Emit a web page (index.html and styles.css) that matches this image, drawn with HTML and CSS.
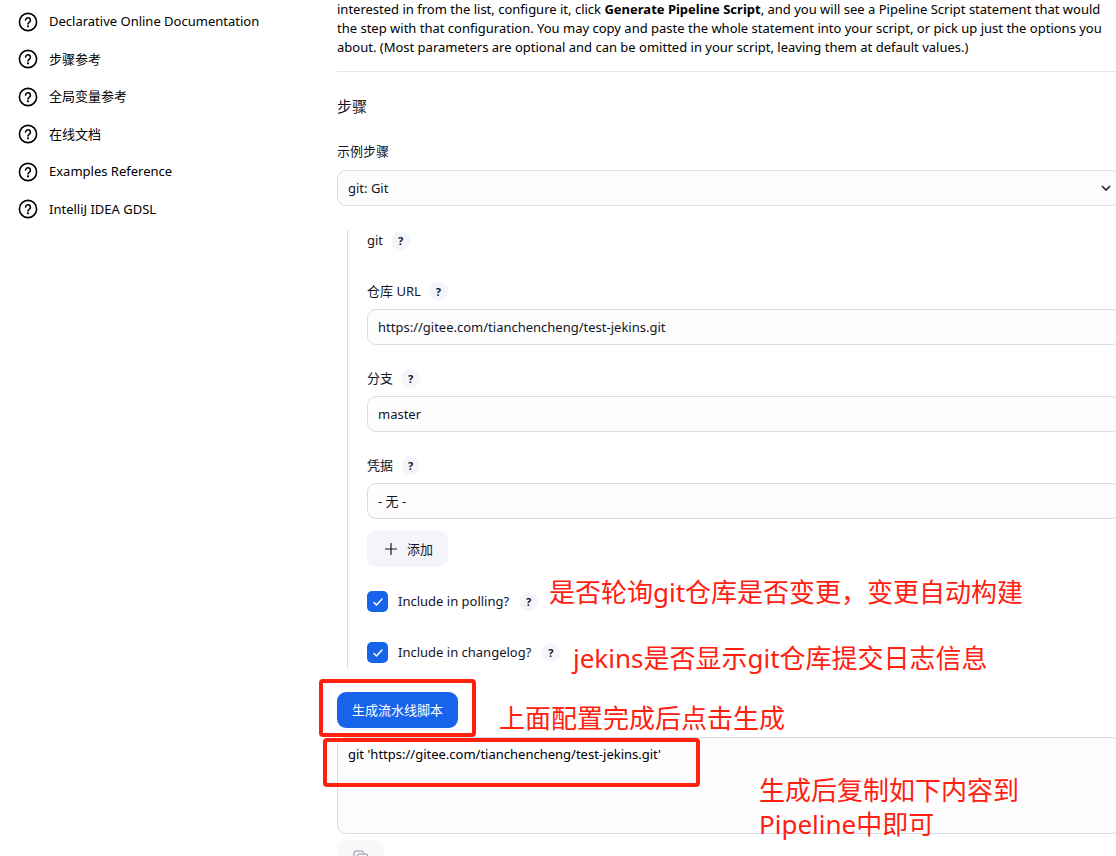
FILE: index.html
```
<!DOCTYPE html>
<html lang="zh-CN">
<head>
  <meta charset="UTF-8">
  <title>Pipeline Syntax</title>
  <meta name="viewport" content="width=device-width, initial-scale=1.0">
  <link rel="stylesheet" href="styles.css">
</head>
<body>
  <svg class="sprite" aria-hidden="true">
    <symbol id="icon-help" viewBox="0 0 20 20">
      <circle cx="10" cy="10" r="8.6" fill="none" stroke="currentColor" stroke-width="1.6"/>
      <path d="M7.6 8.1a2.4 2.4 0 1 1 3.8 2c-.9.6-1.4 1-1.4 1.8" fill="none" stroke="currentColor" stroke-width="1.6" stroke-linecap="round"/>
      <circle cx="10" cy="14.3" r="1.1" fill="currentColor"/>
    </symbol>
  </svg>

  <div class="page">
    <nav class="sidebar">
      <a class="task" href="#"><svg class="task-icon"><use href="#icon-help"/></svg>Declarative Online Documentation</a>
      <a class="task" href="#"><svg class="task-icon"><use href="#icon-help"/></svg>步骤参考</a>
      <a class="task" href="#"><svg class="task-icon"><use href="#icon-help"/></svg>全局变量参考</a>
      <a class="task" href="#"><svg class="task-icon"><use href="#icon-help"/></svg>在线文档</a>
      <a class="task" href="#"><svg class="task-icon"><use href="#icon-help"/></svg>Examples Reference</a>
      <a class="task" href="#"><svg class="task-icon"><use href="#icon-help"/></svg>IntelliJ IDEA GDSL</a>
    </nav>

    <main class="main">
      <p class="intro">
        interested in from the list, configure it, click <b>Generate Pipeline Script</b>, and you will see a Pipeline Script statement that would<br>
        the step with that configuration. You may copy and paste the whole statement into your script, or pick up just the options you<br>
        about. (Most parameters are optional and can be omitted in your script, leaving them at default values.)
      </p>

      <h2 class="section-title">步骤</h2>
      <label class="label" for="step">示例步骤</label>
      <select class="field select" id="step">
        <option>git: Git</option>
      </select>

      <div class="step-config">
        <div class="label-row">
          <span>git</span>
          <button class="help" type="button">?</button>
        </div>

        <div class="form-item">
          <div class="label-row">
            <label for="url">仓库 URL</label>
            <button class="help" type="button">?</button>
          </div>
          <input class="field" type="text" id="url" value="https://gitee.com/tianchencheng/test-jekins.git">
        </div>

        <div class="form-item">
          <div class="label-row">
            <label for="branch">分支</label>
            <button class="help" type="button">?</button>
          </div>
          <input class="field" type="text" id="branch" value="master">
        </div>

        <div class="form-item">
          <div class="label-row">
            <label for="credentials">凭据</label>
            <button class="help" type="button">?</button>
          </div>
          <select class="field" id="credentials">
            <option>- 无 -</option>
          </select>
        </div>

        <button class="btn add-btn" type="button">
          <svg class="add-icon" viewBox="0 0 12 12"><path d="M6 .5v11M.5 6h11" fill="none" stroke="currentColor" stroke-width="1.2" stroke-linecap="round"/></svg>
          添加
        </button>

        <div class="check-row">
          <input class="checkbox" type="checkbox" id="polling" checked>
          <label for="polling">Include in polling?</label>
          <button class="help" type="button">?</button>
        </div>
        <div class="check-row">
          <input class="checkbox" type="checkbox" id="changelog" checked>
          <label for="changelog">Include in changelog?</label>
          <button class="help" type="button">?</button>
        </div>
      </div>

      <button class="btn generate-btn" type="button">生成流水线脚本</button>
      <textarea class="field output" aria-label="Pipeline Script">git 'https://gitee.com/tianchencheng/test-jekins.git'</textarea>
      <button class="btn copy-btn" type="button" aria-label="Copy">
        <svg class="copy-icon" viewBox="0 0 16 16"><path d="M3.500 10.500H3a2 2 0 0 1-2-2V3a2 2 0 0 1 2-2h5.500a2 2 0 0 1 2 2" fill="none" stroke="currentColor"/><rect x="4" y="4" width="11" height="11" rx="2.500" fill="none" stroke="currentColor"/></svg>
      </button>
    </main>

    <!-- Red marks over the form -->
    <div class="mark mark-generate"></div>
    <div class="mark mark-output"></div>
    <p class="note note-polling">是否轮询git仓库是否变更，变更自动构建</p>
    <p class="note note-changelog">jekins是否显示git仓库提交日志信息</p>
    <p class="note note-generate">上面配置完成后点击生成</p>
    <p class="note note-output">生成后复制如下内容到<br>Pipeline中即可</p>
  </div>
</body>
</html>
```
FILE: styles.css
```
:root {
  --text-color: #14141f;
  --accent-color: #1764ea;
  --border-color: #d8dcea;
  --field-color: #fdfdfe;
  --button-color: #f4f5fa;
  --mark-color: #ff2010;
}

* {
  box-sizing: border-box;
}

body {
  margin: 0;
  font-family: "Noto Sans", "Noto Sans CJK SC", sans-serif;
  font-size: 13px;
  line-height: 19px;
  color: var(--text-color);
  background: #fff;
}

button, input, select, textarea {
  font: inherit;
  color: inherit;
}

.sprite {
  display: none;
}

.page {
  position: relative;
  display: grid;
  grid-template-columns: 337px 1fr;
  height: 100vh;
  overflow: hidden;
}

/* Sidebar */
.sidebar {
  display: grid;
  grid-auto-rows: 1fr;
  height: 225px;
  margin-top: 3px;
  padding-left: 18px;
}

.task {
  display: flex;
  align-items: center;
  gap: 11px;
  color: #000;
  text-decoration: none;
}

.task-icon {
  width: 20px;
  height: 20px;
}

/* The form runs a little past the right edge of the window */
.main {
  min-width: 0;
  margin-right: -5px;
}

.intro {
  margin: 0;
  padding-bottom: 14px;
  border-bottom: 1px solid #e6e7ec;
  white-space: nowrap;
  color: #000;
}

.section-title {
  margin: 23px 0 25px;
  font-size: 15px;
  line-height: 22px;
  font-weight: 400;
}

.label {
  display: block;
  margin-bottom: 9px;
}

.field {
  display: block;
  width: 100%;
  height: 36px;
  padding: 0 10px;
  border: 1px solid var(--border-color);
  border-radius: 9px;
  background: var(--field-color);
  outline: none;
  appearance: none;
}

.select {
  background: var(--field-color) url("data:image/svg+xml,%3Csvg xmlns='http://www.w3.org/2000/svg' viewBox='0 0 10 6'%3E%3Cpath d='M1 1l4 4 4-4' fill='none' stroke='%23222' stroke-width='1.6'/%3E%3C/svg%3E") no-repeat right 9px center / 10px 6px;
}

.step-config {
  margin: 24px 0 24px 10px;
  padding: 1px 0 5px 19px;
  border-left: 1px solid var(--border-color);
}

.label-row {
  display: flex;
  align-items: center;
  gap: 8px;
  height: 19px;
}

.help {
  width: 19px;
  height: 19px;
  padding: 0;
  border: none;
  border-radius: 50%;
  background: var(--button-color);
  font-size: 11px;
  font-weight: 700;
}

.form-item {
  margin-top: 32px;
}

.form-item .field {
  margin-top: 8px;
}

.form-item + .form-item {
  margin-top: 24px;
}

.btn {
  display: flex;
  align-items: center;
  justify-content: center;
  height: 36px;
  border: none;
  border-radius: 9px;
  background: var(--button-color);
}

.add-btn {
  gap: 10px;
  margin-top: 12px;
  padding: 0 15px 0 18px;
}

.add-icon {
  width: 12px;
  height: 12px;
}

.check-row {
  display: flex;
  align-items: center;
  height: 21px;
  margin-top: 24px;
}

.check-row + .check-row {
  margin-top: 30px;
}

.check-row label {
  margin: 0 10px;
}

.checkbox {
  width: 21px;
  height: 21px;
  margin: 0;
  border-radius: 5px;
  border: 1px solid var(--border-color);
  appearance: none;
}

.checkbox:checked {
  border: none;
  background: var(--accent-color) url("data:image/svg+xml,%3Csvg xmlns='http://www.w3.org/2000/svg' viewBox='0 0 10 8'%3E%3Cpath d='M1 4.500l2.500 2.500L9 1' fill='none' stroke='%23fff' stroke-width='1.500' stroke-linecap='round' stroke-linejoin='round'/%3E%3C/svg%3E") no-repeat center / 10px 8px;
}

.generate-btn {
  padding: 0 15px;
  background: var(--accent-color);
  color: #fff;
}

.output {
  height: 97px;
  margin: 9px 0 6px;
  padding: 7px 10px;
  color: #000;
  resize: none;
}

.copy-btn {
  width: 47px;
  padding: 0;
  background: #f9f9fb;
  color: #8a8a92;
}

.copy-icon {
  width: 16px;
  height: 16px;
}

/* Annotations */
.mark {
  position: absolute;
  border: 4px solid var(--mark-color);
  border-radius: 4px;
}

.mark-generate {
  left: 319px;
  top: 679px;
  width: 157px;
  height: 58px;
}

.mark-output {
  left: 323px;
  top: 738px;
  width: 377px;
  height: 49px;
}

.note {
  position: absolute;
  margin: 0;
  font-size: 26px;
  line-height: 34px;
  white-space: nowrap;
  color: var(--mark-color);
}

.note-polling {
  left: 549px;
  top: 575px;
}

.note-changelog {
  left: 573px;
  top: 641px;
}

.note-generate {
  left: 499px;
  top: 701px;
}

.note-output {
  left: 759px;
  top: 773px;
}
```
